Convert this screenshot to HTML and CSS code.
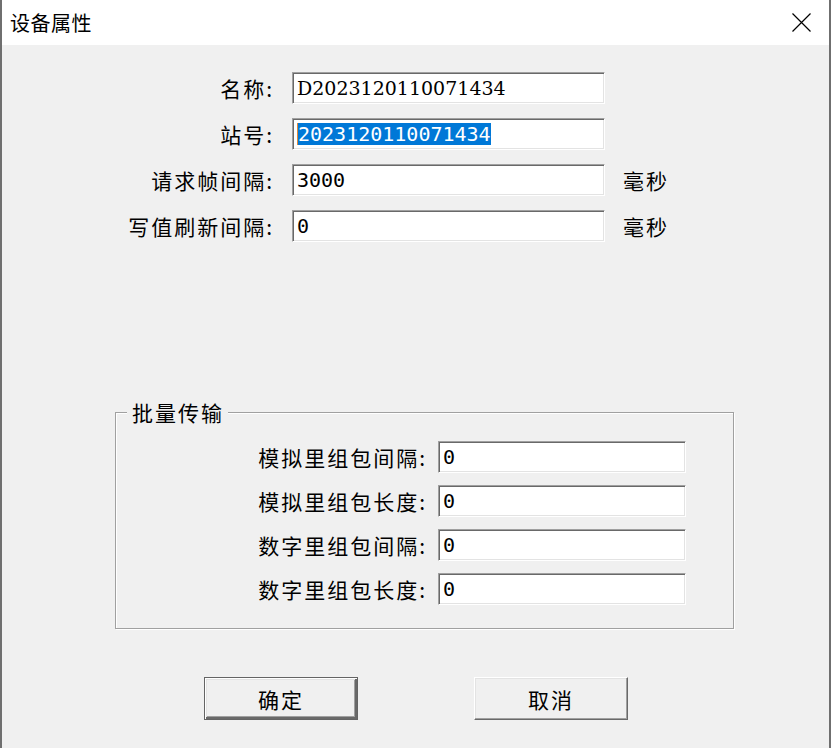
FILE: index.html
```html
<!DOCTYPE html>
<html lang="zh-CN">
<head>
    <meta charset="UTF-8">
    <title>设备属性</title>
    <link rel="stylesheet" href="styles.css">
</head>
<body>
    <div class="window">
        <div class="titlebar">
            <span class="title">设备属性</span>
            <svg class="close" width="19" height="19" viewBox="0 0 19 19">
                <path d="M0.5 0.5 L18.5 18.5 M18.5 0.5 L0.5 18.5" stroke="#000" stroke-width="1.2" fill="none"/>
            </svg>
        </div>
        <div class="content">
            <div class="form">
                <label>名称:</label>
                <div class="edit serif">D2023120110071434</div>
                <span></span>

                <label>站号:</label>
                <div class="edit"><span class="selected">2023120110071434</span></div>
                <span></span>

                <label>请求帧间隔:</label>
                <div class="edit">3000</div>
                <span class="unit">毫秒</span>

                <label>写值刷新间隔:</label>
                <div class="edit">0</div>
                <span class="unit">毫秒</span>
            </div>

            <div class="group">
                <div class="group-title">批量传输</div>
                <div class="group-form">
                    <label>模拟里组包间隔:</label>
                    <div class="edit">0</div>
                    <label>模拟里组包长度:</label>
                    <div class="edit">0</div>
                    <label>数字里组包间隔:</label>
                    <div class="edit">0</div>
                    <label>数字里组包长度:</label>
                    <div class="edit">0</div>
                </div>
            </div>

            <div class="buttons">
                <button class="btn default">确定</button>
                <button class="btn">取消</button>
            </div>
        </div>
    </div>
</body>
</html>
```

FILE: styles.css
```css
body {
    margin: 0;
    padding: 0;
    font-family: "Noto Sans CJK SC", "Noto Sans", sans-serif;
    color: #000;
    background: #f0f0f0;
}
.window {
    width: 831px;
    height: 748px;
    box-sizing: border-box;
    border-left: 2px solid #6f6f6f;
    border-right: 2px solid #6f6f6f;
    display: flex;
    flex-direction: column;
}
.titlebar {
    height: 45px;
    background: #fff;
    display: flex;
    align-items: center;
    justify-content: space-between;
    padding: 0 18px 0 8px;
    flex-shrink: 0;
}
.title {
    font-size: 20px;
    line-height: 24px;
    letter-spacing: 0.5px;
}
.content {
    flex: 1;
    background: #f0f0f0;
    padding-top: 27px;
}
.form {
    display: grid;
    grid-template-columns: 272px 313px auto;
    column-gap: 18px;
    row-gap: 14px;
    align-items: center;
}
label {
    font-size: 21px;
    text-align: right;
    letter-spacing: 2px;
    line-height: 24px;
}
.edit {
    height: 32px;
    box-sizing: border-box;
    background: #fff;
    border: 1px solid;
    border-color: #a0a0a0 #fff #fff #a0a0a0;
    box-shadow: inset 1px 1px 0 #696969, inset -1px -1px 0 #e3e3e3;
    padding: 0 4px;
    font-family: "DejaVu Sans Mono", monospace;
    font-size: 20px;
    line-height: 30px;
    white-space: nowrap;
    overflow: hidden;
}
.edit.serif {
    font-family: "DejaVu Serif", serif;
    font-size: 19px;
}
.selected {
    background: #0078d7;
    color: #fff;
    display: inline-block;
    line-height: 22px;
    border-left: 1px solid #e08a3a;
}
.unit {
    font-size: 21px;
    letter-spacing: 2px;
}
.group {
    margin: 170px 0 0 113px;
    width: 619px;
    height: 217px;
    box-sizing: border-box;
    border: 1px solid #a0a0a0;
    box-shadow: 1px 1px 0 #fff, inset 1px 1px 0 #fff;
}
.group-title {
    display: inline-block;
    margin: -15px 0 0 11px;
    padding: 0 4px 0 5px;
    background: #f0f0f0;
    font-size: 21px;
    line-height: 28px;
    letter-spacing: 2px;
    vertical-align: top;
}
.group-form {
    display: grid;
    grid-template-columns: 311px 248px;
    column-gap: 11px;
    row-gap: 12px;
    align-items: center;
    margin-top: 4px;
}
.buttons {
    display: flex;
    gap: 116px;
    padding-left: 202px;
    margin-top: 48px;
}
.btn {
    width: 154px;
    height: 43px;
    box-sizing: border-box;
    background: #f0f0f0;
    font-family: "Noto Sans CJK SC", sans-serif;
    font-size: 21px;
    letter-spacing: 2px;
    border: 1px solid;
    border-color: #fff #696969 #696969 #fff;
    box-shadow: inset -1px -1px 0 #a0a0a0, inset 1px 1px 0 #e3e3e3;
    padding: 0;
}
.btn.default {
    border: 1px solid #646464;
    box-shadow: inset 1px 1px 0 #fff, inset -2px -2px 0 #696969, inset 2px 2px 0 #e3e3e3, inset -3px -3px 0 #a0a0a0;
}
```
